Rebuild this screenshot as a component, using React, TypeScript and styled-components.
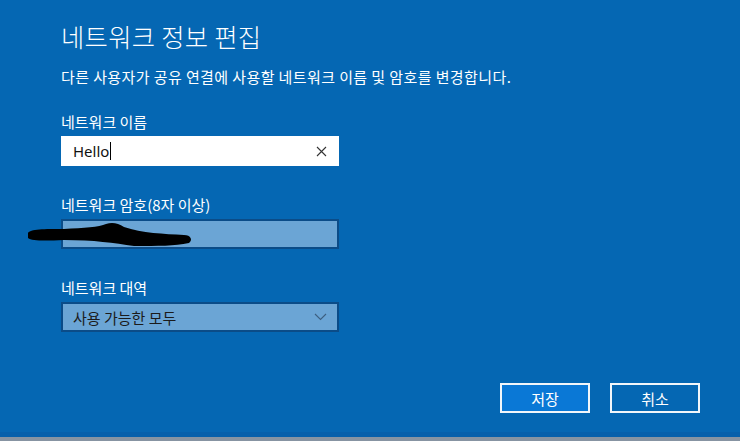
import React from "react";
import styled, { createGlobalStyle } from "styled-components";

const Global = createGlobalStyle`
  html, body { margin: 0; padding: 0; background: #0567b3; }
  body { font-family: "Noto Sans CJK KR", "Noto Sans", sans-serif; }
  * { box-sizing: border-box; }
`;

const Screen = styled.div`
  width: 740px;
  height: 441px;
  display: flex;
  flex-direction: column;
  background: #0567b3;
  overflow: hidden;
`;

const Dialog = styled.div`
  flex: 1;
  display: flex;
  flex-direction: column;
  padding: 18px 40px 0 61px;
  color: #ffffff;
`;

const Title = styled.h1`
  margin: 0;
  font-size: 25.3px;
  font-weight: 300;
  line-height: 36px;
  letter-spacing: 0.3px;
`;

const Description = styled.p`
  margin: 13px 0 0;
  font-size: 15px;
  line-height: 20px;
  font-weight: 400;
  letter-spacing: 0.4px;
`;

const Field = styled.div<{ $top: number }>`
  position: relative;
  display: flex;
  flex-direction: column;
  width: 278px;
  margin-top: ${(p) => p.$top}px;
`;

const Label = styled.label`
  font-size: 15px;
  line-height: 20px;
  margin-bottom: 4px;
`;

const Box = styled.div<{ $variant: "text" | "muted" }>`
  height: 30px;
  display: flex;
  align-items: center;
  padding: 0 10px 0 10px;
  border: 2px solid ${(p) => (p.$variant === "text" ? "#ffffff" : "#0b4c88")};
  background: ${(p) => (p.$variant === "text" ? "#ffffff" : "#6ba5d5")};
  color: #111111;
  font-size: 15px;
`;

const Value = styled.span`
  flex: 1;
  font-family: "Noto Sans", "Noto Sans CJK KR", sans-serif;
  display: flex;
  align-items: center;
`;

const SelectValue = styled.span`
  flex: 1;
  color: #1b1b1b;
  font-size: 15px;
`;

const Caret = styled.span`
  display: inline-block;
  width: 1px;
  height: 18px;
  background: #000;
  margin-left: 1px;
`;

const Scribble = styled.svg`
  position: absolute;
  left: -37px;
  top: 26px;
  width: 170px;
  height: 30px;
  overflow: visible;
`;

const Actions = styled.div`
  margin-top: auto;
  display: flex;
  justify-content: flex-end;
  gap: 20px;
  padding-bottom: 19px;
`;

const Button = styled.button<{ $primary?: boolean }>`
  width: 90px;
  height: 30px;
  border: 2px solid #f2f6fa;
  background: ${(p) => (p.$primary ? "#0a78d6" : "#0567b3")};
  color: #ffffff;
  font-family: "Noto Sans CJK KR", sans-serif;
  font-size: 15px;
  padding: 0;
`;

const BottomEdge = styled.div`
  height: 9px;
  display: flex;
  flex-direction: column;
`;

const EdgeShade = styled.div`
  height: 5px;
  background: #0660ab;
`;

const EdgeGray = styled.div`
  flex: 1;
  background: #8794a2;
`;

export default function App() {
  return (
    <>
      <Global />
      <Screen>
        <Dialog>
          <Title>네트워크 정보 편집</Title>
          <Description>
            다른 사용자가 공유 연결에 사용할 네트워크 이름 및 암호를 변경합니다.
          </Description>

          <Field $top={25}>
            <Label>네트워크 이름</Label>
            <Box $variant="text">
              <Value>
                Hello
                <Caret />
              </Value>
              <svg width="11" height="11" viewBox="0 0 11 11">
                <path d="M1 1L10 10M10 1L1 10" stroke="#333" strokeWidth="1.1" />
              </svg>
            </Box>
          </Field>

          <Field $top={29}>
            <Label>네트워크 암호(8자 이상)</Label>
            <Box $variant="muted" />
            <Scribble viewBox="0 0 170 30">
              <path
                d="M4 12 C6 8 20 8 40 8 C60 7 75 6 82 3 C88 1 94 2 100 6 C118 12 140 13 160 14 C167 14 169 19 165 22 C150 25 135 25 110 25 C90 22 70 19 40 19 C20 20 8 20 4 17 Z"
                fill="#000"
              />
            </Scribble>
          </Field>

          <Field $top={29}>
            <Label>네트워크 대역</Label>
            <Box $variant="muted">
              <SelectValue>사용 가능한 모두</SelectValue>
              <svg width="13" height="8" viewBox="0 0 13 8">
                <path d="M1 1L6.5 6.5L12 1" stroke="#3d5f80" strokeWidth="1.1" fill="none" />
              </svg>
            </Box>
          </Field>

          <Actions>
            <Button $primary>저장</Button>
            <Button>취소</Button>
          </Actions>
        </Dialog>
        <BottomEdge>
          <EdgeShade />
          <EdgeGray />
        </BottomEdge>
      </Screen>
    </>
  );
}
